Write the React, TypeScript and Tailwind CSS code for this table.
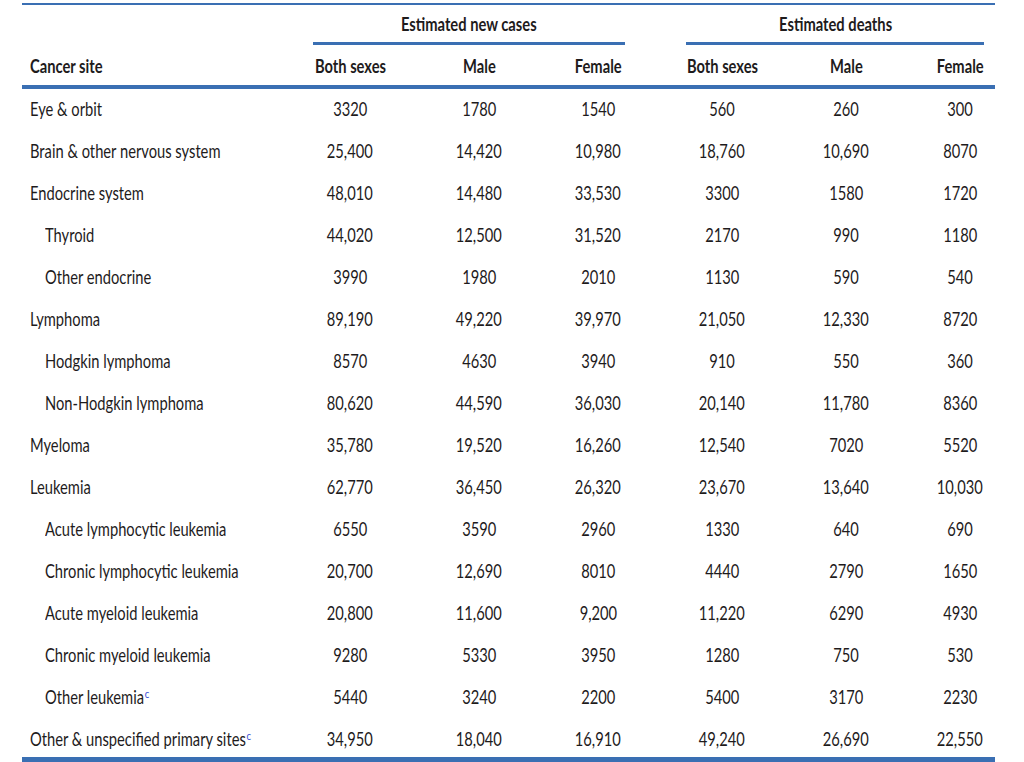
const ROWS: { site: string; indent?: boolean; sup?: boolean; v: string[] }[] = [
  { site: "Eye & orbit", v: ["3320", "1780", "1540", "560", "260", "300"] },
  { site: "Brain & other nervous system", v: ["25,400", "14,420", "10,980", "18,760", "10,690", "8070"] },
  { site: "Endocrine system", v: ["48,010", "14,480", "33,530", "3300", "1580", "1720"] },
  { site: "Thyroid", indent: true, v: ["44,020", "12,500", "31,520", "2170", "990", "1180"] },
  { site: "Other endocrine", indent: true, v: ["3990", "1980", "2010", "1130", "590", "540"] },
  { site: "Lymphoma", v: ["89,190", "49,220", "39,970", "21,050", "12,330", "8720"] },
  { site: "Hodgkin lymphoma", indent: true, v: ["8570", "4630", "3940", "910", "550", "360"] },
  { site: "Non-Hodgkin lymphoma", indent: true, v: ["80,620", "44,590", "36,030", "20,140", "11,780", "8360"] },
  { site: "Myeloma", v: ["35,780", "19,520", "16,260", "12,540", "7020", "5520"] },
  { site: "Leukemia", v: ["62,770", "36,450", "26,320", "23,670", "13,640", "10,030"] },
  { site: "Acute lymphocytic leukemia", indent: true, v: ["6550", "3590", "2960", "1330", "640", "690"] },
  { site: "Chronic lymphocytic leukemia", indent: true, v: ["20,700", "12,690", "8010", "4440", "2790", "1650"] },
  { site: "Acute myeloid leukemia", indent: true, v: ["20,800", "11,600", "9,200", "11,220", "6290", "4930"] },
  { site: "Chronic myeloid leukemia", indent: true, v: ["9280", "5330", "3950", "1280", "750", "530"] },
  { site: "Other leukemia", indent: true, sup: true, v: ["5440", "3240", "2200", "5400", "3170", "2230"] },
  { site: "Other & unspecified primary sites", sup: true, v: ["34,950", "18,040", "16,910", "49,240", "26,690", "22,550"] },
];

// column template shared by header and body rows
const GRID = "grid grid-cols-[291px_74px_184px_54px_61px_72px_176px_52px_9px] items-center";
const VALUE_COLS = ["col-start-2", "col-start-3", "col-start-4", "col-start-6", "col-start-7", "col-start-8"];
// the source type is set narrow, so squeeze Lato horizontally
const NARROW = "inline-block whitespace-nowrap scale-x-[0.8]";

function Cell({ col, children }: { col: string; children: React.ReactNode }) {
  return (
    <div className={`${col} flex justify-center`}>
      <span className={NARROW}>{children}</span>
    </div>
  );
}

export default function App() {
  return (
    <div className="h-[762px] overflow-hidden bg-white pt-[3px] pl-[22px] font-['Lato','Noto_Sans',sans-serif] text-[18.4px] text-[#1e1b1c]">
      <div className="w-[973px]">
        <div className="h-[2px] bg-[#3a6fb3]" />

        {/* group headings */}
        <div className={`${GRID} h-[37px] pt-[2px] font-bold`}>
          <Cell col="col-start-2 col-span-3">Estimated new cases</Cell>
          <Cell col="col-start-6 col-span-3">Estimated deaths</Cell>
        </div>
        <div className={GRID}>
          <div className="col-start-2 col-span-3 h-[3px] bg-[#3a6fb3]" />
          <div className="col-start-6 col-span-3 mr-[2px] h-[3px] bg-[#3a6fb3]" />
        </div>

        {/* column headings */}
        <div className={`${GRID} h-[40px] pt-[4px] font-bold`}>
          <div className="pl-[8px]">
            <span className={`${NARROW} origin-left`}>Cancer site</span>
          </div>
          {["Both sexes", "Male", "Female", "Both sexes", "Male", "Female"].map((h, i) => (
            <Cell key={i} col={VALUE_COLS[i]}>
              {h}
            </Cell>
          ))}
        </div>
        <div className="h-[4px] bg-[#3a6fb3]" />

        {ROWS.map((r, idx) => (
          <div
            key={r.site}
            className={`${GRID} ${idx === ROWS.length - 1 ? "h-[38px] pt-[4px]" : "h-[42px]"}`}
          >
            <div className={r.indent ? "pl-[23px]" : "pl-[8px]"}>
              <span className={`${NARROW} origin-left`}>
                {r.site}
                {r.sup && <sup className="ml-[1px] text-[12px] text-[#3b4fd6]">c</sup>}
              </span>
            </div>
            {r.v.map((val, i) => (
              <Cell key={i} col={VALUE_COLS[i]}>
                {val}
              </Cell>
            ))}
          </div>
        ))}
        <div className="h-[5px] bg-[#3a6fb3]" />
      </div>
    </div>
  );
}
